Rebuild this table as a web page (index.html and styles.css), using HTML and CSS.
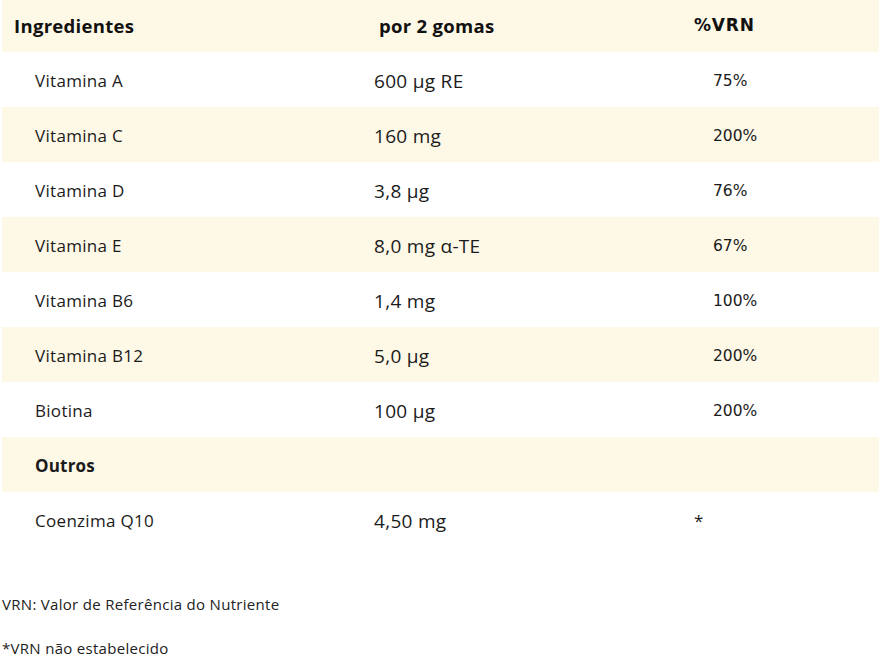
FILE: index.html
```html
<!DOCTYPE html>
<html lang="pt">
<head>
<meta charset="utf-8">
<link rel="stylesheet" href="styles.css">
</head>
<body>
<div class="wrap">
  <table class="nutri">
    <colgroup><col class="c1"><col class="c2"><col class="c3"></colgroup>
    <thead>
      <tr class="alt">
        <th class="h1">Ingredientes</th>
        <th class="h2">por 2 gomas</th>
        <th class="h3">%VRN</th>
      </tr>
    </thead>
    <tbody>
      <tr><td class="name">Vitamina A</td><td class="val">600 µg RE</td><td class="pct">75%</td></tr>
      <tr class="alt"><td class="name">Vitamina C</td><td class="val">160 mg</td><td class="pct">200%</td></tr>
      <tr><td class="name">Vitamina D</td><td class="val">3,8 µg</td><td class="pct">76%</td></tr>
      <tr class="alt"><td class="name">Vitamina E</td><td class="val">8,0 mg α-TE</td><td class="pct">67%</td></tr>
      <tr><td class="name">Vitamina B6</td><td class="val">1,4 mg</td><td class="pct">100%</td></tr>
      <tr class="alt"><td class="name">Vitamina B12</td><td class="val">5,0 µg</td><td class="pct">200%</td></tr>
      <tr><td class="name">Biotina</td><td class="val">100 µg</td><td class="pct">200%</td></tr>
      <tr class="alt"><td class="name sub">Outros</td><td class="val"></td><td class="pct"></td></tr>
      <tr><td class="name">Coenzima Q10</td><td class="val">4,50 mg</td><td class="star">*</td></tr>
    </tbody>
  </table>
  <p class="note first">VRN: Valor de Referência do Nutriente</p>
  <p class="note">*VRN não estabelecido</p>
</div>
</body>
</html>
```

FILE: styles.css
```css
html, body {
  margin: 0;
  padding: 0;
  background: #ffffff;
}
body {
  font-family: "Open Sans", "Noto Sans", sans-serif;
  color: #1b1b1b;
}
.wrap {
  padding-left: 2px;
}
.nutri {
  width: 877px;
  border-collapse: collapse;
  table-layout: fixed;
}
.c1 { width: 360px; }
.c2 { width: 320px; }
.c3 { width: 197px; }
.nutri tr { height: 55px; }
.nutri thead tr { height: 52px; }
.alt { background: #fef8e6; }
.nutri th, .nutri td {
  padding: 2px 0 0 12px;
  text-align: left;
  vertical-align: middle;
}
.nutri th {
  font-size: 18.5px;
  font-weight: 700;
  letter-spacing: 0.3px;
  color: #111;
  padding-top: 0;
  padding-bottom: 2px;
}
.h2 { padding-left: 17px !important; }
.h3 {
  font-family: "DejaVu Sans", sans-serif;
  font-size: 17px !important;
  letter-spacing: 0.8px !important;
}
.name {
  padding-left: 33px !important;
  font-size: 17px;
  letter-spacing: 0.3px;
}
.sub { font-weight: 700; letter-spacing: 0.2px; }
.val {
  font-size: 19px;
  letter-spacing: 0.3px;
}
.pct {
  padding-left: 31px !important;
  font-family: "DejaVu Sans", sans-serif;
  font-size: 15.5px;
  font-weight: 400;
  color: #1b1b1b;
}
.star {
  font-size: 17px;
}
.note {
  margin: 0;
  font-size: 15px;
  letter-spacing: 0.3px;
  color: #222;
  line-height: 20px;
}
.note.first {
  margin-top: 47px;
}
.note + .note {
  margin-top: 24px;
}
```
